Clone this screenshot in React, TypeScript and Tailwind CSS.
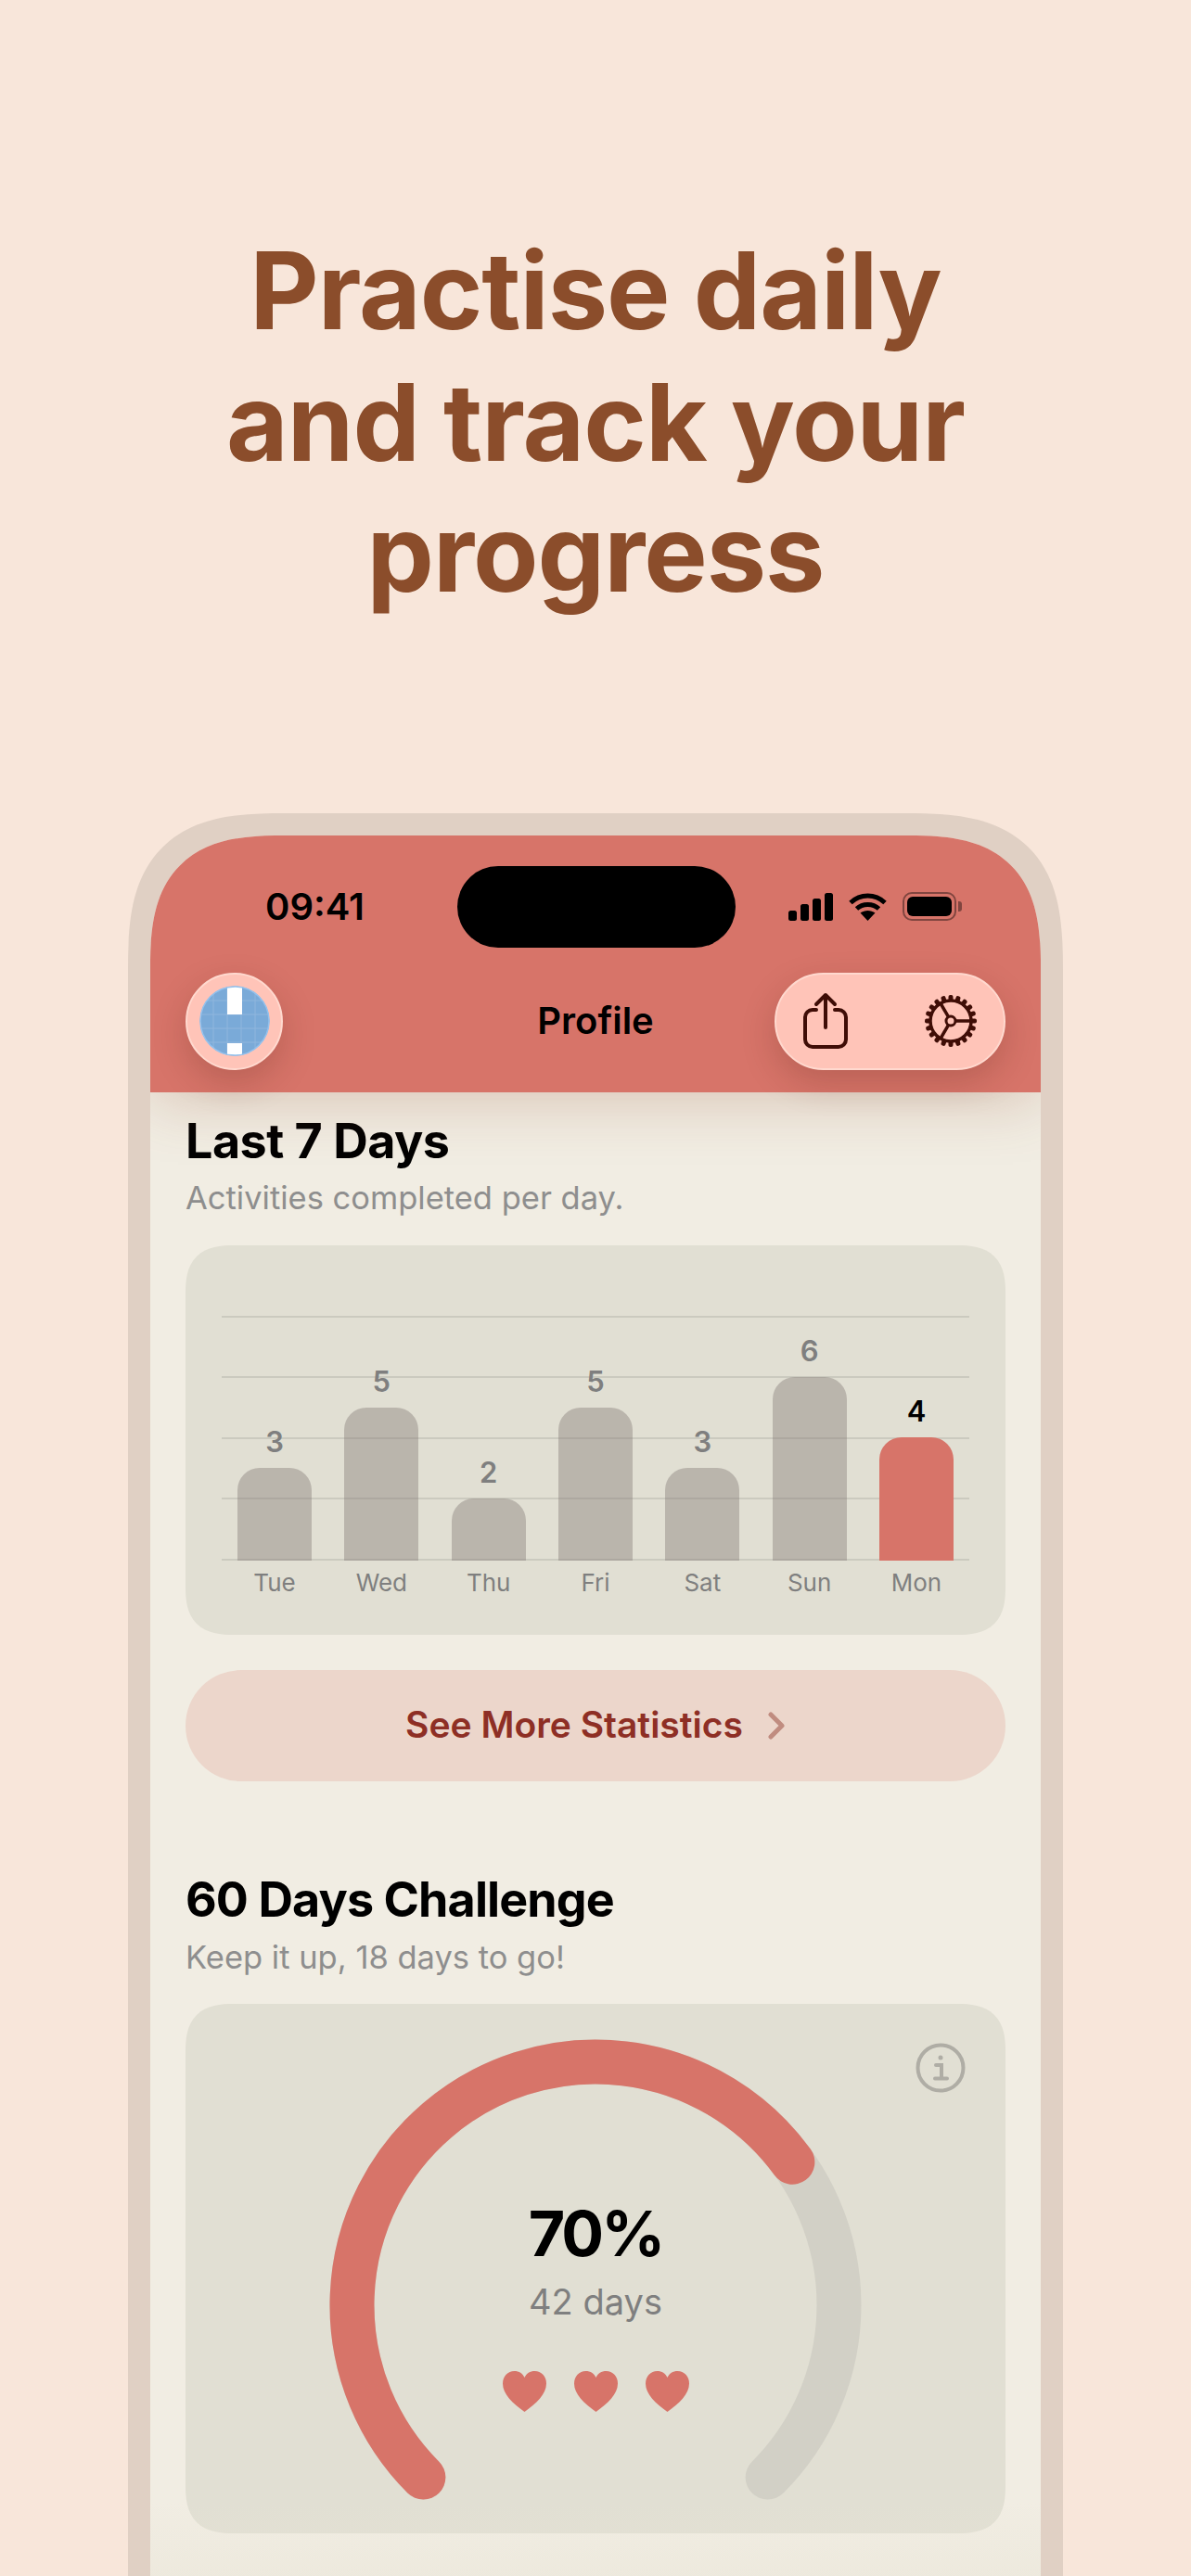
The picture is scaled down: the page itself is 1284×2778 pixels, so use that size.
const F = "#3f0d06";

function Gear() {
  const teeth = Array.from({ length: 20 }, (_, i) => i * 18);
  return (
    <svg width="60" height="60" viewBox="0 0 60 60" fill="none">
      {teeth.map((a) => (
        <rect key={a} x="27.500" y="2" width="5" height="7" rx="2" fill={F} transform={`rotate(${a} 30 30)`} />
      ))}
      <circle cx="30" cy="30" r="22" stroke={F} strokeWidth="3.500" />
      <circle cx="30" cy="30" r="5" stroke={F} strokeWidth="3" />
      <path d="M35 30H52M27.500 25.700L19 11M27.500 34.300L19 49" stroke={F} strokeWidth="3.500" />
    </svg>
  );
}

function Share() {
  return (
    <svg width="50" height="62" viewBox="0 0 50 62" fill="none" stroke={F} strokeWidth="4" strokeLinecap="round" strokeLinejoin="round">
      <path d="M15 19H11a8 8 0 0 0-8 8v24a8 8 0 0 0 8 8h28a8 8 0 0 0 8-8V27a8 8 0 0 0-8-8h-4" />
      <path d="M25 38V3M15 13L25 3L35 13" />
    </svg>
  );
}

function Globe() {
  const lines = [15, 30, 45, 60];
  return (
    <svg width="76" height="76" viewBox="0 0 76 76">
      <defs>
        <clipPath id="globe">
          <circle cx="38" cy="38" r="37" />
        </clipPath>
      </defs>
      <circle cx="38" cy="38" r="37.500" fill="#7aaad8" />
      <g clipPath="url(#globe)">
        {lines.map((p) => (
          <path key={p} d={`M${p} 0V76M0 ${p + 1}H76`} stroke="#8fb6dd" strokeWidth="1" />
        ))}
        <rect x="30" y="0" width="16" height="31" fill="#fff" />
        <rect x="30" y="62" width="16" height="14" fill="#fff" />
      </g>
      <circle cx="38" cy="38" r="37" fill="none" stroke="#93c2ee" strokeWidth="1.500" />
    </svg>
  );
}

function Signal() {
  return (
    <div className="flex items-end gap-[4px] h-[30px]">
      <div className="w-[9px] h-[11px] rounded-[2.5px] bg-black" />
      <div className="w-[9px] h-[18px] rounded-[2.5px] bg-black" />
      <div className="w-[9px] h-[24px] rounded-[2.5px] bg-black" />
      <div className="w-[9px] h-[30px] rounded-[2.5px] bg-black" />
    </div>
  );
}

function Wifi() {
  return (
    <svg width="41" height="30" viewBox="0 0 41 30" fill="none" stroke="#000" strokeWidth="5">
      <path d="M2 10.500C12.500 .5 28.500 .5 39 10.500" />
      <path d="M8.500 17C15 11 26 11 32.500 17" />
      <path d="M20.500 30L12.500 21.500C17 18 24 18 28.500 21.500Z" fill="#000" stroke="none" />
    </svg>
  );
}

function Battery() {
  return (
    <div className="flex items-center gap-[2px]">
      <div className="w-[58px] h-[31px] rounded-[10px] border-[2.5px] border-[#00000066] p-[3px]">
        <div className="w-full h-full rounded-[6px] bg-black" />
      </div>
      <div className="w-[4px] h-[11px] rounded-r-[3px] bg-[#00000066]" />
    </div>
  );
}

const BARS = [
  { d: "Tue", v: 3 },
  { d: "Wed", v: 5 },
  { d: "Thu", v: 2 },
  { d: "Fri", v: 5 },
  { d: "Sat", v: 3 },
  { d: "Sun", v: 6 },
  { d: "Mon", v: 4, on: true },
];

function Chart() {
  return (
    <div className="relative mx-[39px] h-[264px]">
      <div className="absolute inset-x-0 top-0 h-[264px] flex flex-col justify-between">
        {[0, 1, 2, 3, 4].map((i) => (
          <div key={i} className="h-[2px] bg-[#00000018]" />
        ))}
      </div>
      <div className="absolute inset-x-[17px] bottom-0 flex justify-between items-end">
        {BARS.map((b) => (
          <div key={b.d} className="w-[80px] flex flex-col items-center">
            <div className={`text-[31px] leading-[36px] font-semibold mb-[10px] ${b.on ? "text-black" : "text-[#7f7f7f]"}`}>{b.v}</div>
            <div
              className={`w-[80px] rounded-t-[24px] ${b.on ? "bg-[#d77469]" : "bg-[#7f767266]"}`}
              style={{ height: b.v * 32.8 + 1 }}
            />
          </div>
        ))}
      </div>
    </div>
  );
}

function Gauge() {
  const cx = 310;
  const cy = 300;
  const r = 262.5;
  const pt = (deg: number) => {
    const t = (deg * Math.PI) / 180;
    return `${cx + r * Math.sin(t)} ${cy - r * Math.cos(t)}`;
  };
  return (
    <svg width="620" height="520" viewBox="0 0 620 520" fill="none" strokeWidth="48" strokeLinecap="round">
      <path d={`M${pt(-135)}A${r} ${r} 0 1 1 ${pt(135)}`} stroke="#d2d0c6" />
      <path d={`M${pt(-135)}A${r} ${r} 0 1 1 ${pt(54)}`} stroke="#d77469" />
    </svg>
  );
}

function Heart() {
  return (
    <svg width="47" height="44" viewBox="0 0 47 44">
      <path d="M23.500 44C11 35 0 25 0 13.500C0 5.500 5.500 0 12.500 0C17.500 0 21.500 2.500 23.500 7C25.500 2.500 29.500 0 34.500 0C41.500 0 47 5.500 47 13.500C47 25 36 35 23.500 44Z" fill="#d77469" />
    </svg>
  );
}

export default function App() {
  return (
    <div className="w-[1284px] h-[2778px] overflow-hidden bg-[#f8e6da] [font-family:Inter,sans-serif] flex flex-col items-center">
      <h1 className="mt-[243px] w-full text-center text-[115px] leading-[141.500px] font-bold tracking-[-1px] text-[#8b4d2b]">
        Practise daily
        <br />
        and track your
        <br />
        progress
      </h1>
      <div className="mt-[209px] w-[1008px] flex-1 border-[24px] border-b-0 border-[#e0d0c4] rounded-t-[170px] [corner-shape:superellipse(1.5)] bg-[#f1ede3] overflow-hidden relative">
        <header className="relative z-10 h-[277px] bg-[#d77469] shadow-[0_10px_60px_rgba(150,80,50,0.25)]">
          <div className="flex items-center pt-[33px] h-[121px]">
            <div className="w-[331px] pl-[124px] text-[40px] leading-[48px] font-semibold text-black">09:41</div>
            <div className="w-[300px] h-[88px] rounded-[44px] bg-black" />
            <div className="ml-[57px] flex items-center gap-[17px]">
              <Signal />
              <Wifi />
              <Battery />
            </div>
          </div>
          <div className="flex items-center px-[38px] mt-[27px]">
            <div className="flex-1">
              <div className="w-[105px] h-[105px] rounded-full bg-[#ffc4b8] border-2 border-[#ffd9cf] flex items-center justify-center shadow-[0_14px_36px_rgba(80,30,20,0.22)]">
                <Globe />
              </div>
            </div>
            <div className="text-[40px] leading-[48px] font-semibold text-black">Profile</div>
            <div className="flex-1 flex justify-end">
              <div className="w-[249px] h-[105px] rounded-full bg-[#ffc4b8] border-2 border-[#ffd9cf] flex items-center justify-between pl-[28px] pr-[27px] shadow-[0_14px_36px_rgba(80,30,20,0.22)]">
                <Share />
                <Gear />
              </div>
            </div>
          </div>
        </header>
        <main className="px-[38px]">
          <h2 className="mt-[24px] text-[52px] leading-[58px] font-bold tracking-[-0.5px] text-black">Last 7 Days</h2>
          <p className="mt-[10px] text-[34.5px] leading-[44px] text-[#8e8e8e]">Activities completed per day.</p>
          <section className="mt-[29px] h-[420px] rounded-[52px] [corner-shape:superellipse(1.4)] bg-[#e1dfd3] pt-[76px]">
            <Chart />
            <div className="mx-[56px] mt-[8px] flex justify-between">
              {BARS.map((b) => (
                <div key={b.d} className="w-[80px] text-center text-[26px] leading-[32px] text-[#7f7f7f]">{b.d}</div>
              ))}
            </div>
          </section>
          <button className="mt-[38px] w-full h-[120px] rounded-[60px] bg-[#ecd6cb] flex items-center justify-center gap-[26px]">
            <span className="text-[39px] font-semibold text-[#8e2f25]">See More Statistics</span>
            <svg width="20" height="30" viewBox="0 0 20 30" fill="none" stroke="#c08c80" strokeWidth="5" strokeLinecap="round" strokeLinejoin="round">
              <path d="M4 3L16 15L4 27" />
            </svg>
          </button>
          <h2 className="mt-[96px] text-[52px] leading-[64px] font-bold tracking-[-0.9px] text-black">60 Days Challenge</h2>
          <p className="mt-[8px] text-[34.5px] leading-[44px] text-[#8e8e8e]">Keep it up, 18 days to go!</p>
          <section className="relative mt-[28px] h-[571px] rounded-[52px] [corner-shape:superellipse(1.4)] bg-[#e1dfd3] flex flex-col items-center">
            <div className="absolute left-[132px] top-[25px]">
              <Gauge />
            </div>
            <svg className="absolute right-[43px] top-[42px]" width="54" height="54" viewBox="0 0 54 54" fill="none" stroke="#afada5" strokeWidth="4" strokeLinecap="round">
              <circle cx="27" cy="27" r="24.500" />
              <path d="M22 24H28V38M21 38.500H34" />
              <circle cx="27" cy="16" r="2.500" fill="#afada5" stroke="none" />
            </svg>
            <div className="relative mt-[207px] text-[68px] leading-[80px] font-bold tracking-[-3px] text-black">70%</div>
            <div className="relative mt-[10px] text-[38px] leading-[48px] text-[#7f7f7f]">42 days</div>
            <div className="relative mt-[51px] flex gap-[30px]">
              <Heart />
              <Heart />
              <Heart />
            </div>
          </section>
        </main>
        <div className="absolute inset-x-0 bottom-0 h-[80px] bg-gradient-to-b from-[#e8e4d500] to-[#e8e4d566]" />
      </div>
    </div>
  );
}
